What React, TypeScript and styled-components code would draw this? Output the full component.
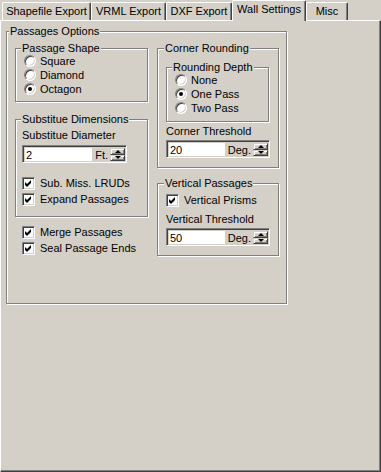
import React from 'react'
import styled, { createGlobalStyle } from 'styled-components'

const GlobalStyle = createGlobalStyle`
    html, body {
        margin: 0;
        padding: 0;
        background: #d4d0c8;
    }
    body {
        font-family: "Liberation Sans", Arial, sans-serif;
        font-size: 11px;
        color: #000;
    }
`

const Window = styled.div`
    width: 381px;
    height: 472px;
    display: flex;
    flex-direction: column;
    background: #d4d0c8;
    overflow: hidden;
`

const TabStrip = styled.div`
    display: flex;
    align-items: flex-end;
    height: 20px;
    padding-left: 2px;
    flex-shrink: 0;
`

const Tab = styled.div<{ $w: number; $active?: boolean }>`
    box-sizing: border-box;
    width: ${p => p.$w}px;
    height: ${p => (p.$active ? 21 : 18)}px;
    margin-bottom: ${p => (p.$active ? -1 : 0)}px;
    position: relative;
    z-index: ${p => (p.$active ? 1 : 0)};
    background: #d4d0c8;
    border-top: 1px solid #fff;
    border-left: 1px solid #fff;
    border-right: 1px solid #404040;
    box-shadow: inset -1px 0 #808080;
    border-radius: 2px 2px 0 0;
    display: flex;
    justify-content: center;
    padding-top: ${p => (p.$active ? 2 : 2)}px;
    line-height: 13px;
    white-space: nowrap;
`

const Panel = styled.div`
    flex: 1;
    box-sizing: border-box;
    border-top: 1px solid #fff;
    border-left: 1px solid #fff;
    border-right: 1px solid #404040;
    border-bottom: 1px solid #404040;
    box-shadow: inset -1px -1px #808080;
    padding: 10px 0 0 5px;
`

const Group = styled.div<{ $w: number; $mt?: number }>`
    box-sizing: border-box;
    width: ${p => p.$w}px;
    margin-top: ${p => p.$mt || 0}px;
    border: 1px solid #808080;
    box-shadow: inset 1px 1px #fff, 1px 1px #fff;
    display: flex;
    flex-direction: column;
`

const OptionsGroup = styled(Group)`
    height: 273px;
`

const Caption = styled.span<{ $x: number }>`
    align-self: flex-start;
    margin: -7px 0 0 ${p => p.$x}px;
    padding: 0 1px;
    background: #d4d0c8;
    line-height: 13px;
    height: 12px;
    white-space: nowrap;
`

const Body = styled.div<{ $pad: string }>`
    display: flex;
    flex-direction: column;
    padding: ${p => p.$pad};
`

const Columns = styled.div`
    display: flex;
    gap: 9px;
    padding: 11px 0 0 8px;
`

const Column = styled.div<{ $w: number }>`
    width: ${p => p.$w}px;
    display: flex;
    flex-direction: column;
`

const Row = styled.div<{ $h: number; $gap: number; $mt?: number }>`
    display: flex;
    align-items: center;
    height: ${p => p.$h}px;
    gap: ${p => p.$gap}px;
    margin-top: ${p => p.$mt || 0}px;
    white-space: nowrap;
`

const MergeList = styled.div`
    display: flex;
    flex-direction: column;
    margin-top: 7px;
    padding-left: 7px;
`

const RadioDot = styled.span<{ $on?: boolean }>`
    box-sizing: border-box;
    width: 12px;
    height: 12px;
    border-radius: 50%;
    background: #fff;
    border: 1px solid;
    border-color: #808080 #fff #fff #808080;
    box-shadow: inset 1px 1px #404040, inset -1px -1px #d4d0c8;
    display: flex;
    align-items: center;
    justify-content: center;
    flex-shrink: 0;
    &::after {
        content: '';
        width: 4px;
        height: 4px;
        border-radius: 50%;
        background: ${p => (p.$on ? '#000' : 'transparent')};
    }
`

const CheckBox = styled.span`
    box-sizing: border-box;
    width: 13px;
    height: 13px;
    background: #fff;
    border: 1px solid;
    border-color: #808080 #fff #fff #808080;
    box-shadow: inset 1px 1px #404040, inset -1px -1px #d4d0c8;
    display: flex;
    align-items: center;
    justify-content: center;
    flex-shrink: 0;
`

const Label = styled.div<{ $mt: number }>`
    line-height: 14px;
    height: 14px;
    margin-top: ${p => p.$mt}px;
    white-space: nowrap;
`

const Field = styled.div<{ $w: number; $mt: number }>`
    box-sizing: border-box;
    display: flex;
    width: ${p => p.$w}px;
    height: 18px;
    margin-top: ${p => p.$mt}px;
    border: 1px solid;
    border-color: #808080 #fff #fff #808080;
    box-shadow: inset 1px 1px #404040, inset -1px -1px #d4d0c8;
    padding: 2px 1px 1px 2px;
`

const Value = styled.div`
    flex: 1;
    background: #fff;
    line-height: 14px;
    padding-left: 1px;
`

const Unit = styled.div`
    background: #d4d0c8;
    line-height: 14px;
    padding: 0 2px 0 3px;
`

const Spin = styled.div`
    display: flex;
    flex-direction: column;
    width: 15px;
`

const SpinBtn = styled.div<{ $up?: boolean }>`
    box-sizing: border-box;
    flex: 1;
    background: #d4d0c8;
    border: 1px solid;
    border-color: #d4d0c8 #404040 #404040 #d4d0c8;
    box-shadow: inset 1px 1px #fff, inset -1px -1px #808080;
    display: flex;
    align-items: center;
    justify-content: center;
    &::after {
        content: '';
        width: 0;
        height: 0;
        border-left: 3px solid transparent;
        border-right: 3px solid transparent;
        ${p => (p.$up ? 'border-bottom: 3px solid #000;' : 'border-top: 3px solid #000;')}
    }
`

const Tick = () => (
    <svg width="7" height="7" viewBox="0 0 7 7">
        <path d="M0 2 L2 4 L6 0 L6 3 L2 7 L0 5 Z" fill="#000" />
    </svg>
)

const Radio = ({ label, on }: { label: string; on?: boolean }) => (
    <Row $h={14} $gap={4}>
        <RadioDot $on={on} />
        {label}
    </Row>
)

const Check = ({ label, mt }: { label: string; mt?: number }) => (
    <Row $h={16} $gap={5} $mt={mt}>
        <CheckBox>
            <Tick />
        </CheckBox>
        {label}
    </Row>
)

const NumberField = ({ value, unit, w, mt }: { value: string; unit: string; w: number; mt: number }) => (
    <Field $w={w} $mt={mt}>
        <Value>{value}</Value>
        <Unit>{unit}</Unit>
        <Spin>
            <SpinBtn $up />
            <SpinBtn />
        </Spin>
    </Field>
)

const tabs = [
    { label: 'Shapefile Export', w: 89 },
    { label: 'VRML Export', w: 75 },
    { label: 'DXF Export', w: 66 },
    { label: 'Wall Settings', w: 74, active: true },
    { label: 'Misc', w: 42 },
]

const App = () => {
    return (
        <>
            <GlobalStyle />
            <Window>
                <TabStrip>
                    {tabs.map(t => (
                        <Tab key={t.label} $w={t.w} $active={t.active}>
                            {t.label}
                        </Tab>
                    ))}
                </TabStrip>
                <Panel>
                    <OptionsGroup $w={281}>
                        <Caption $x={2}>Passages Options</Caption>
                        <Columns>
                            <Column $w={133}>
                                <Group $w={133}>
                                    <Caption $x={5}>Passage Shape</Caption>
                                    <Body $pad="0 0 5px 8px">
                                        <Radio label="Square" />
                                        <Radio label="Diamond" />
                                        <Radio label="Octagon" on />
                                    </Body>
                                </Group>
                                <Group $w={133} $mt={17}>
                                    <Caption $x={5}>Substitue Dimensions</Caption>
                                    <Body $pad="0 0 9px 6px">
                                        <Label $mt={3}>Substitue Diameter</Label>
                                        <NumberField value="2" unit="Ft." w={105} mt={3} />
                                        <Check label="Sub. Miss. LRUDs" mt={12} />
                                        <Check label="Expand Passages" />
                                    </Body>
                                </Group>
                                <MergeList>
                                    <Check label="Merge Passages" />
                                    <Check label="Seal Passage Ends" />
                                </MergeList>
                            </Column>
                            <Column $w={122}>
                                <Group $w={122}>
                                    <Caption $x={6}>Corner Rounding</Caption>
                                    <Body $pad="0 0 9px 8px">
                                        <Group $w={103} $mt={13}>
                                            <Caption $x={5}>Rounding Depth</Caption>
                                            <Body $pad="0 0 6px 8px">
                                                <Radio label="None" />
                                                <Radio label="One Pass" on />
                                                <Radio label="Two Pass" />
                                            </Body>
                                        </Group>
                                        <Label $mt={2}>Corner Threshold</Label>
                                        <NumberField value="20" unit="Deg." w={104} mt={2} />
                                    </Body>
                                </Group>
                                <Group $w={122} $mt={15}>
                                    <Caption $x={6}>Vertical Passages</Caption>
                                    <Body $pad="0 0 9px 8px">
                                        <Check label="Vertical Prisms" mt={3} />
                                        <Label $mt={4}>Vertical Threshold</Label>
                                        <NumberField value="50" unit="Deg." w={104} mt={2} />
                                    </Body>
                                </Group>
                            </Column>
                        </Columns>
                    </OptionsGroup>
                </Panel>
            </Window>
        </>
    )
}

export default App
